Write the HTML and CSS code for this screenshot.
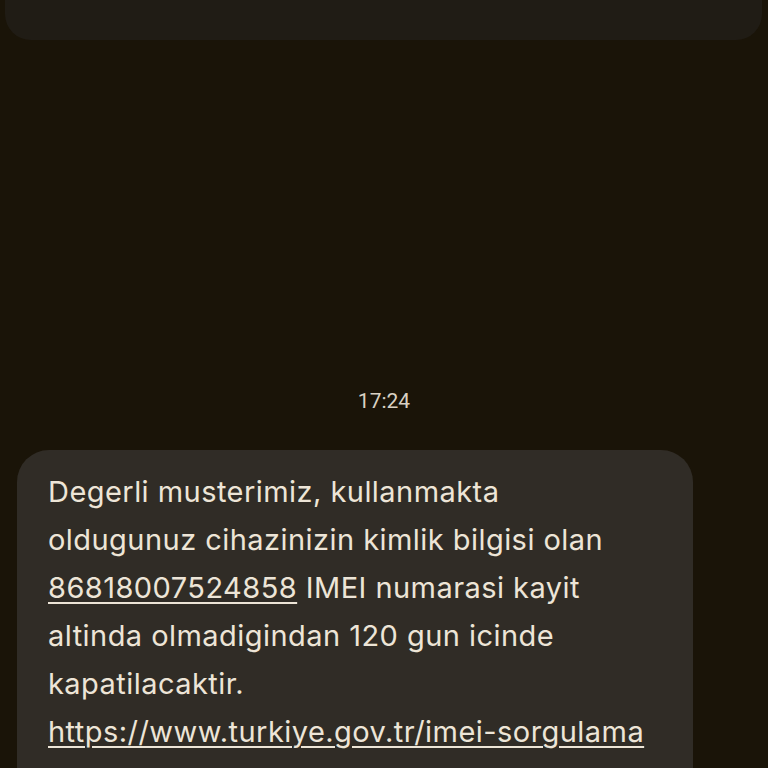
FILE: index.html
```html
<!DOCTYPE html>
<html>
<head>
<meta charset="utf-8">
<link rel="stylesheet" href="styles.css">
</head>
<body>
<div class="screen">
  <div class="prev-bubble"></div>
  <div class="timestamp">17:24</div>
  <div class="row">
    <div class="bubble">
      <div class="line">Degerli musterimiz, kullanmakta</div>
      <div class="line">oldugunuz cihazinizin kimlik bilgisi olan</div>
      <div class="line"><span class="link">86818007524858</span> IMEI numarasi kayit</div>
      <div class="line">altinda olmadigindan 120 gun icinde</div>
      <div class="line">kapatilacaktir.</div>
      <div class="line"><span class="link">https://www.turkiye.gov.tr/imei-sorgulama</span></div>
      <div class="line">adresinden kaydinizi yaptirabilirsiniz.</div>
    </div>
  </div>
</div>
</body>
</html>
```
FILE: styles.css
```css
html, body {
  margin: 0;
  padding: 0;
  background: #1a1408;
}
.screen {
  width: 768px;
  height: 768px;
  overflow: hidden;
  display: flex;
  flex-direction: column;
  font-family: Roboto, "Noto Sans", sans-serif;
}
.prev-bubble {
  height: 40px;
  margin: 0 6px 0 5px;
  background: #201c15;
  border-radius: 0 0 26px 26px;
  flex: none;
}
.timestamp {
  margin-top: 347px;
  text-align: center;
  color: #d9d1c3;
  font-size: 21px;
  line-height: 28px;
  flex: none;
}
.row {
  margin-top: 35px;
  padding-left: 17px;
  flex: none;
}
.bubble {
  width: 676px;
  box-sizing: border-box;
  background: #302c26;
  border-radius: 32px;
  padding: 18px 20px 20px 31px;
  color: #ede5d7;
  font-family: Inter, Roboto, sans-serif;
  font-size: 29px;
  letter-spacing: 0.45px;
  line-height: 48px;
}
.line {
  white-space: nowrap;
}
.link {
  text-decoration: underline;
  text-decoration-thickness: 2px;
  text-underline-offset: 4px;
}
```
